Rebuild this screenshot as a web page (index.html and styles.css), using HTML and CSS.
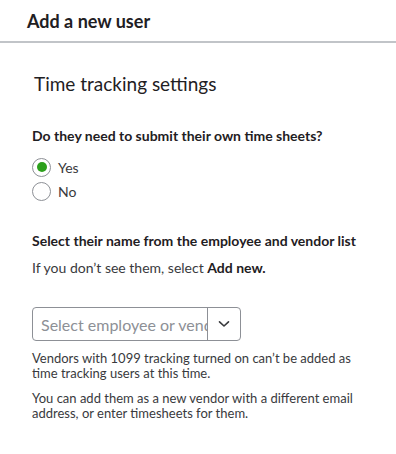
FILE: index.html
```html
<!DOCTYPE html>
<html>
<head>
    <title>Add a new user</title>
    <link rel="stylesheet" href="styles.css">
</head>
<body>
    <header class="top-bar">
        <h1>Add a new user</h1>
    </header>
    <div class="content">
        <h2>Time tracking settings</h2>

        <p class="question">Do they need to submit their own time sheets?</p>
        <div class="radio-group">
            <label class="radio-row">
                <span class="radio checked"></span>
                <span>Yes</span>
            </label>
            <label class="radio-row">
                <span class="radio"></span>
                <span>No</span>
            </label>
        </div>

        <p class="question select-title">Select their name from the employee and vendor list</p>
        <p class="hint">If you don&rsquo;t see them, select <b>Add new.</b></p>

        <div class="picker">
            <input type="text" class="picker-input" placeholder="Select employee or vendor">
            <div class="picker-btn">
                <svg width="12" height="8" viewBox="0 0 12 8">
                    <path d="M1.5 1.8 L6 6 L10.5 1.8" fill="none" stroke="#393a3d" stroke-width="1.6" stroke-linecap="round" stroke-linejoin="round"/>
                </svg>
            </div>
        </div>

        <p class="note">Vendors with 1099 tracking turned on can&rsquo;t be added as time tracking users at this time.</p>
        <p class="note">You can add them as a new vendor with a different email address, or enter timesheets for them.</p>
    </div>
</body>
</html>
```

FILE: styles.css
```css
body {
    font-family: Lato, "Open Sans", sans-serif;
    color: #393a3d;
    background-color: #fff;
    margin: 0;
    padding: 0;
}

.top-bar {
    height: 41px;
    padding-left: 27px;
    border-bottom: 2px solid #c1c4c8;
}

.top-bar h1 {
    margin: 0;
    padding-top: 10px;
    font-size: 18px;
    font-weight: bold;
    color: #1f2023;
}

.content {
    padding: 0 32px;
}

h2 {
    margin: 29px 0 0 2px;
    font-size: 19px;
    font-weight: normal;
    color: #1f2023;
}

.question {
    margin: 32px 0 0;
    font-size: 14px;
    font-weight: bold;
    color: #1f2023;
}

.radio-group {
    margin-top: 12px;
}

.radio-row {
    display: flex;
    align-items: center;
    gap: 7px;
    height: 22px;
    margin-bottom: 2px;
    font-size: 14px;
}

.radio {
    width: 17px;
    height: 17px;
    border: 1px solid #8d9096;
    border-radius: 50%;
    display: flex;
    align-items: center;
    justify-content: center;
}

.radio.checked::after {
    content: "";
    width: 10px;
    height: 10px;
    border-radius: 50%;
    background-color: #2ca01c;
}

.select-title {
    margin-top: 30px;
}

.hint {
    margin: 10px 0 0;
    font-size: 14px;
}

.hint b {
    color: #1f2023;
}

.picker {
    display: flex;
    width: 207px;
    height: 32px;
    margin-top: 31px;
    border: 1px solid #8d9096;
    border-radius: 4px;
}

.picker-input {
    flex: 1;
    min-width: 0;
    margin: 0;
    padding: 0 0 0 8px;
    border: none;
    border-right: 1px solid #8d9096;
    border-radius: 4px 0 0 4px;
    background: transparent;
    font-family: inherit;
    font-size: 16px;
    color: #393a3d;
    outline: none;
}

.picker-input::placeholder {
    color: #8d9096;
}

.picker-btn {
    width: 32px;
    display: flex;
    align-items: center;
    justify-content: center;
}

.note {
    margin: 10px 0 0;
    font-size: 13px;
    line-height: 15px;
}
```
